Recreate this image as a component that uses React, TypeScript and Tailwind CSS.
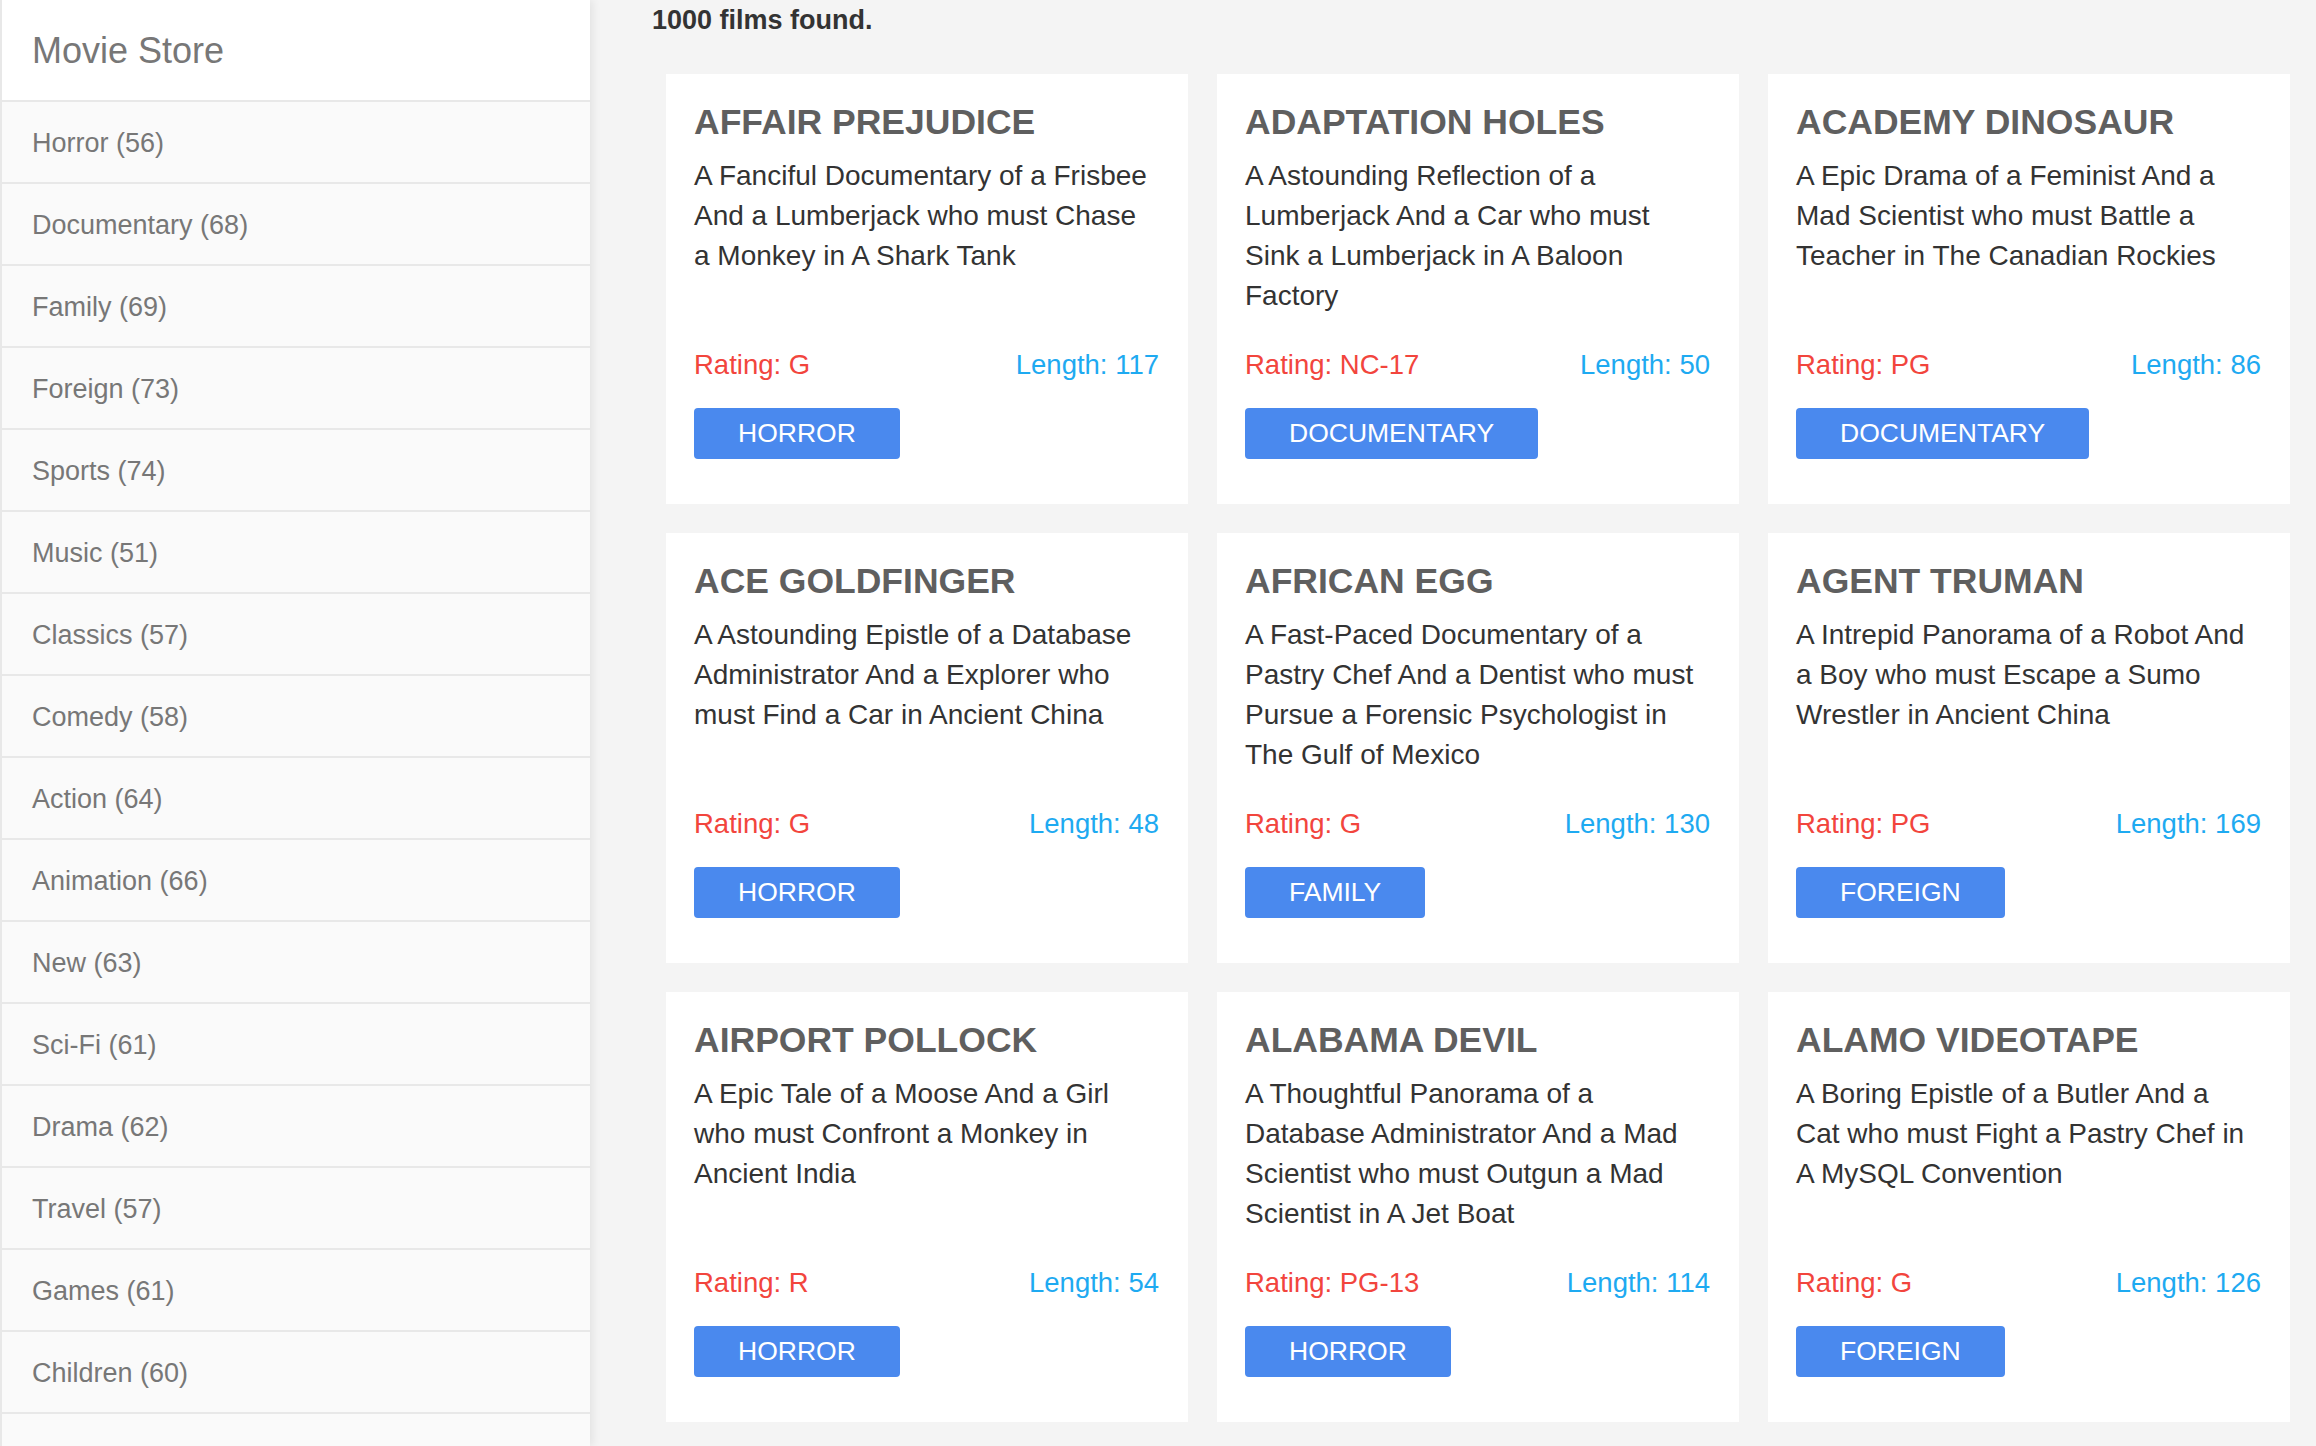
import React from "react";

type Film = {
  title: string;
  description: string;
  rating: string;
  length: number;
  category: string;
};

const categories: [string, number][] = [
  ["Horror", 56],
  ["Documentary", 68],
  ["Family", 69],
  ["Foreign", 73],
  ["Sports", 74],
  ["Music", 51],
  ["Classics", 57],
  ["Comedy", 58],
  ["Action", 64],
  ["Animation", 66],
  ["New", 63],
  ["Sci-Fi", 61],
  ["Drama", 62],
  ["Travel", 57],
  ["Games", 61],
  ["Children", 60],
];

const films: Film[] = [
  {
    title: "AFFAIR PREJUDICE",
    description: "A Fanciful Documentary of a Frisbee And a Lumberjack who must Chase a Monkey in A Shark Tank",
    rating: "G",
    length: 117,
    category: "Horror",
  },
  {
    title: "ADAPTATION HOLES",
    description: "A Astounding Reflection of a Lumberjack And a Car who must Sink a Lumberjack in A Baloon Factory",
    rating: "NC-17",
    length: 50,
    category: "Documentary",
  },
  {
    title: "ACADEMY DINOSAUR",
    description: "A Epic Drama of a Feminist And a Mad Scientist who must Battle a Teacher in The Canadian Rockies",
    rating: "PG",
    length: 86,
    category: "Documentary",
  },
  {
    title: "ACE GOLDFINGER",
    description: "A Astounding Epistle of a Database Administrator And a Explorer who must Find a Car in Ancient China",
    rating: "G",
    length: 48,
    category: "Horror",
  },
  {
    title: "AFRICAN EGG",
    description:
      "A Fast-Paced Documentary of a Pastry Chef And a Dentist who must Pursue a Forensic Psychologist in The Gulf of Mexico",
    rating: "G",
    length: 130,
    category: "Family",
  },
  {
    title: "AGENT TRUMAN",
    description: "A Intrepid Panorama of a Robot And a Boy who must Escape a Sumo Wrestler in Ancient China",
    rating: "PG",
    length: 169,
    category: "Foreign",
  },
  {
    title: "AIRPORT POLLOCK",
    description: "A Epic Tale of a Moose And a Girl who must Confront a Monkey in Ancient India",
    rating: "R",
    length: 54,
    category: "Horror",
  },
  {
    title: "ALABAMA DEVIL",
    description:
      "A Thoughtful Panorama of a Database Administrator And a Mad Scientist who must Outgun a Mad Scientist in A Jet Boat",
    rating: "PG-13",
    length: 114,
    category: "Horror",
  },
  {
    title: "ALAMO VIDEOTAPE",
    description: "A Boring Epistle of a Butler And a Cat who must Fight a Pastry Chef in A MySQL Convention",
    rating: "G",
    length: 126,
    category: "Foreign",
  },
];

/** サイドバー（カテゴリ一覧） */
function Sidebar() {
  return (
    <aside className="relative z-10 flex w-[590px] shrink-0 flex-col border-l-2 border-[#e8e8e8] bg-[#fafafa] shadow-[3px_0_8px_rgba(0,0,0,0.07)]">
      <div className="flex h-[102px] shrink-0 items-center border-b-2 border-[#e8e8e8] bg-white pl-[30px] text-[36px] leading-[41px] text-[#777]">
        Movie Store
      </div>
      {categories.map(([name, count]) => (
        <div
          key={name}
          className="flex h-[82px] shrink-0 items-center border-b-2 border-[#e8e8e8] pl-[30px] pt-[2px] text-[27px] leading-[31px] text-[#777]"
        >
          {name} ({count})
        </div>
      ))}
      <div className="h-[82px] shrink-0" />
    </aside>
  );
}

/** 映画カード */
function FilmCard({ film }: { film: Film }) {
  return (
    <div className="flex h-[430px] flex-col bg-white pb-[45px] pl-[28px] pr-[29px] pt-[27px]">
      <h2 className="text-[35.5px] font-bold leading-[42px] text-[#5f5f5f]">{film.title}</h2>
      <p className="mr-[8px] mt-[13px] h-[160px] text-[28px] leading-[40px] text-[#333]">{film.description}</p>
      <div className="mt-[31px] flex justify-between text-[27.5px] leading-[36px]">
        <span className="text-[#f2453d]">Rating: {film.rating}</span>
        <span className="text-[#1eaaf1]">Length: {film.length}</span>
      </div>
      <div className="mt-[25px] leading-none">
        <span className="inline-block rounded-[4px] bg-[#4a89ee] px-[44px] py-[10px] text-[26.5px] uppercase leading-[31px] text-white">
          {film.category}
        </span>
      </div>
    </div>
  );
}

export default function App() {
  return (
    <div
      className="flex h-[1446px] w-[2316px] overflow-hidden bg-[#f4f4f4]"
      style={{ fontFamily: '"Liberation Sans", Arial, Helvetica, sans-serif' }}
    >
      <Sidebar />
      <main className="flex-1 pl-[62px] pt-[5px]">
        <div className="text-[27px] font-bold leading-[31px] text-[#333]">1000 films found.</div>
        <div className="ml-[14px] mt-[38px] grid w-[1624px] grid-cols-3 gap-[29px]">
          {films.map((f) => (
            <FilmCard key={f.title} film={f} />
          ))}
        </div>
      </main>
    </div>
  );
}
